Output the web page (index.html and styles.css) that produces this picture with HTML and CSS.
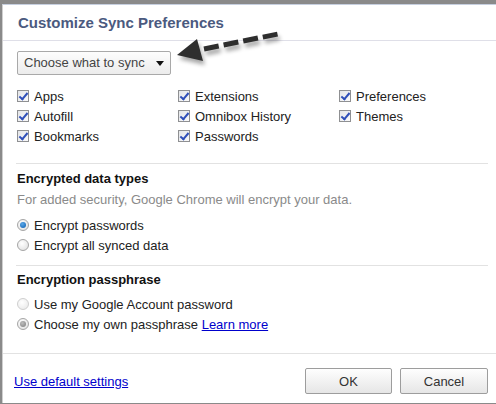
FILE: index.html
```html
<!DOCTYPE html>
<html>
<head>
<meta charset="utf-8">
<link rel="stylesheet" href="styles.css">
</head>
<body>
<div class="frame">
  <div class="dialog">
    <div class="title">Customize Sync Preferences</div>
    <div class="content">
      <div class="select">Choose what to sync <span class="caret"></span></div>
      <div class="grid">
        <label class="opt"><span class="cb"></span>Apps</label>
        <label class="opt"><span class="cb"></span>Extensions</label>
        <label class="opt"><span class="cb"></span>Preferences</label>
        <label class="opt"><span class="cb"></span>Autofill</label>
        <label class="opt"><span class="cb"></span>Omnibox History</label>
        <label class="opt"><span class="cb"></span>Themes</label>
        <label class="opt"><span class="cb"></span>Bookmarks</label>
        <label class="opt"><span class="cb"></span>Passwords</label>
      </div>
    </div>
    <div class="section sec-enc">
      <div class="heading">Encrypted data types</div>
      <div class="desc">For added security, Google Chrome will encrypt your data.</div>
      <div class="radios">
        <div class="opt"><span class="rb rb-on"></span>Encrypt passwords</div>
        <div class="opt"><span class="rb"></span>Encrypt all synced data</div>
      </div>
    </div>
    <div class="section sec-pass">
      <div class="heading">Encryption passphrase</div>
      <div class="radios radios-pass">
        <div class="opt"><span class="rb rb-dis"></span>Use my Google Account password</div>
        <div class="opt"><span class="rb rb-gray"></span>Choose my own passphrase&nbsp;<a class="link" href="#">Learn more</a></div>
      </div>
    </div>
    <div class="footer">
      <a class="link default" href="#">Use default settings</a>
      <div class="buttons">
        <button class="btn btn-ok">OK</button>
        <button class="btn btn-cancel">Cancel</button>
      </div>
    </div>
  </div>
  <svg class="arrow" width="120" height="50" viewBox="170 26 120 50" xmlns="http://www.w3.org/2000/svg">
    <defs>
      <filter id="blur" x="-20%" y="-40%" width="140%" height="180%">
        <feGaussianBlur stdDeviation="2"/>
      </filter>
    </defs>
    <g transform="translate(2 4)" filter="url(#blur)" opacity="0.35">
      <line x1="204" y1="49" x2="278" y2="34" stroke="#000" stroke-width="5" stroke-dasharray="15 5"/>
      <polygon points="177,55 197,39 203,61" fill="#000"/>
    </g>
    <line x1="204" y1="49" x2="278" y2="34" stroke="#2e2e2e" stroke-width="5" stroke-dasharray="15 5"/>
    <polygon points="177,55 197,39 203,61" fill="#2e2e2e"/>
  </svg>
</div>
</body>
</html>
```

FILE: styles.css
```css
html, body {
  margin: 0;
  padding: 0;
}
body {
  font-family: "Liberation Sans", Arial, sans-serif;
  font-size: 13px;
  color: #222;
  background: #8a8a8a;
}
.frame {
  position: relative;
  width: 496px;
  height: 404px;
  box-sizing: border-box;
  padding: 4px 0 0 2px;
  overflow: hidden;
}
.dialog {
  background: #fff;
  border-top: 1px solid #c6cfdf;
  border-left: 1px solid #cfcfcf;
  height: 399px;
  box-sizing: border-box;
}
.title {
  height: 35px;
  line-height: 35px;
  padding-left: 15px;
  font-size: 15px;
  font-weight: bold;
  color: #4b5a7f;
  border-bottom: 1px solid #dfdfe8;
}
.content {
  padding-left: 14px;
}
.select {
  margin-top: 10px;
  width: 154px;
  height: 24px;
  box-sizing: border-box;
  border: 1px solid #a9a9a9;
  border-radius: 2px;
  background: linear-gradient(#fdfdfd, #ececec);
  color: #444;
  line-height: 22px;
  padding-left: 6px;
  position: relative;
}
.caret {
  position: absolute;
  right: 6px;
  top: 9px;
  width: 0;
  height: 0;
  border-left: 4px solid transparent;
  border-right: 4px solid transparent;
  border-top: 5px solid #111;
}
.grid {
  margin-top: 11px;
  display: grid;
  grid-template-columns: 161px 161px 161px;
  grid-auto-rows: 20px;
}
.opt {
  display: flex;
  align-items: center;
  height: 20px;
  white-space: nowrap;
}
.cb {
  width: 12px;
  height: 12px;
  box-sizing: border-box;
  border: 1px solid #8f9092;
  background: linear-gradient(135deg, #e3e5e8, #fafafa);
  margin-right: 5px;
  position: relative;
  flex: none;
}
.cb::after {
  content: "";
  position: absolute;
  left: 3px;
  top: 0px;
  width: 3px;
  height: 7px;
  border: solid #2f4fb8;
  border-width: 0 2px 2px 0;
  transform: rotate(40deg);
}
.section {
  margin: 17px 8px 0 13px;
  border-top: 1px solid #e2e2e2;
  padding-left: 1px;
}
.sec-pass {
  margin-top: 10px;
}
.heading {
  margin-top: 5px;
  height: 20px;
  line-height: 20px;
  font-weight: bold;
  color: #111;
}
.sec-pass .heading {
  margin-top: 4px;
}
.desc {
  margin-top: 1px;
  height: 20px;
  line-height: 20px;
  color: #8a8a8a;
}
.radios {
  margin-top: 5px;
}
.radios-pass {
  margin-top: 4px;
}
.rb {
  width: 12px;
  height: 12px;
  box-sizing: border-box;
  border-radius: 50%;
  border: 1px solid #a5a5a5;
  background: radial-gradient(circle at 40% 35%, #ffffff, #dcdcdc);
  margin-right: 5px;
  position: relative;
  flex: none;
}
.rb-on::after, .rb-gray::after {
  content: "";
  position: absolute;
  left: 2px;
  top: 2px;
  width: 6px;
  height: 6px;
  border-radius: 50%;
  background: radial-gradient(circle at 40% 35%, #5aa8e8, #0b5cb0);
}
.rb-gray::after {
  background: radial-gradient(circle at 40% 35%, #bdbdbd, #7d7d7d);
}
.rb-dis {
  border-color: #cfcfcf;
  background: radial-gradient(circle at 40% 35%, #ffffff, #e6e6e6);
}
.link {
  color: #0000cc;
  text-decoration: underline;
}
.footer {
  margin-top: 19px;
  border-top: 1px solid #e2e2e2;
  padding: 14px 8px 0 11px;
  display: flex;
  align-items: center;
  justify-content: space-between;
}
.buttons {
  display: flex;
  gap: 8px;
}
.btn {
  font-family: "Liberation Sans", Arial, sans-serif;
  font-size: 13px;
  color: #333;
  height: 26px;
  border: 1px solid #9d9d9d;
  border-radius: 2px;
  background: linear-gradient(#fefefe, #e6e6e6);
  padding: 0;
}
.btn-ok {
  width: 87px;
}
.btn-cancel {
  width: 88px;
}
.arrow {
  position: absolute;
  left: 170px;
  top: 26px;
  pointer-events: none;
}
```
